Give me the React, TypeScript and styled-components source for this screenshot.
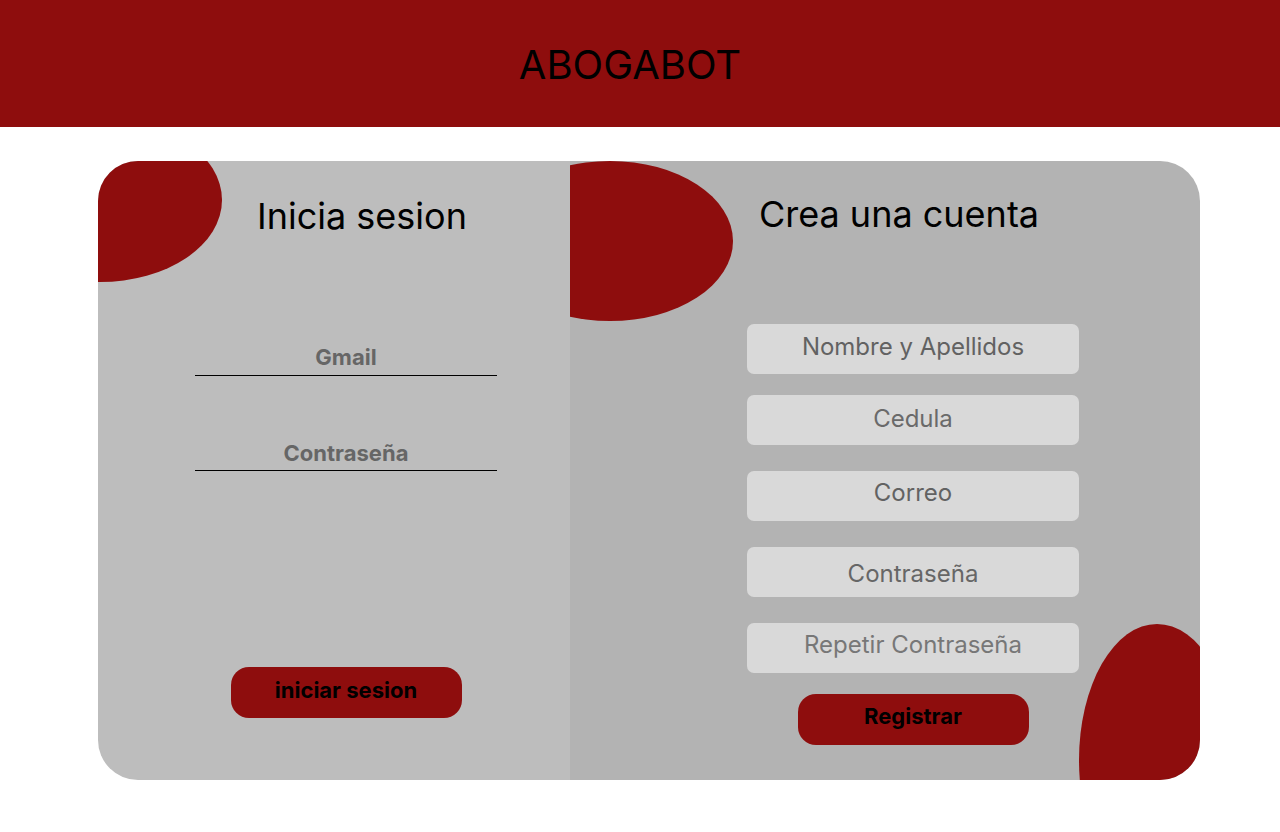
import React from "react";
import styled, { createGlobalStyle } from "styled-components";

const RED = "#8e0d0d";

const GlobalStyle = createGlobalStyle`
  body {
    margin: 0;
    background: #ffffff;
    font-family: Inter, "Noto Sans", sans-serif;
  }
`;

const Header = styled.header`
  height: 127px;
  background: ${RED};
  display: flex;
  align-items: center;
  justify-content: center;
  padding-right: 20px;
  box-sizing: border-box;
`;

const Brand = styled.h1`
  margin: 0;
  font-size: 40px;
  line-height: 48px;
  font-weight: 400;
  color: #000;
  padding-top: 2px;
`;

const Card = styled.main`
  width: 1102px;
  height: 619px;
  margin: 34px 0 0 98px;
  border-radius: 40px;
  overflow: hidden;
  display: grid;
  grid-template-columns: 472px 1fr;
`;

const Panel = styled.section<{ $bg: string }>`
  position: relative;
  overflow: hidden;
  background: ${(p) => p.$bg};
  display: flex;
  flex-direction: column;
`;

// decorative ellipses behind the content
const Blob = styled.div<{ $l: number; $t: number; $w: number; $h: number }>`
  position: absolute;
  left: ${(p) => p.$l}px;
  top: ${(p) => p.$t}px;
  width: ${(p) => p.$w}px;
  height: ${(p) => p.$h}px;
  border-radius: 50%;
  background: ${RED};
`;

const Title = styled.h2<{ $top: number; $shift: number }>`
  position: relative;
  margin: ${(p) => p.$top}px 0 0;
  padding-left: ${(p) => p.$shift}px;
  text-align: center;
  font-size: 36px;
  line-height: 44px;
  font-weight: 400;
  color: #000;
`;

const LoginForm = styled.div`
  position: relative;
  width: 302px;
  margin: 106px 0 0 97px;
  display: flex;
  flex-direction: column;
  align-items: center;
`;

const LineField = styled.div<{ $gap: number; $pad: number }>`
  width: 100%;
  margin-top: ${(p) => p.$gap}px;
  padding-bottom: ${(p) => p.$pad}px;
  border-bottom: 1px solid #000;
  text-align: center;
  font-size: 22px;
  line-height: 27px;
  font-weight: 700;
  color: #666666;
`;

const PillButton = styled.button<{ $top: number; $pad: number }>`
  margin-top: ${(p) => p.$top}px;
  width: 231px;
  height: 51px;
  border: none;
  border-radius: 18px;
  background: ${RED};
  color: #000;
  font-family: Inter, "Noto Sans", sans-serif;
  font-size: 22px;
  font-weight: 700;
  padding: 0 0 ${(p) => p.$pad}px;
  cursor: pointer;
`;

const SignupForm = styled.div`
  position: relative;
  width: 332px;
  margin: 88px 0 0 177px;
  display: flex;
  flex-direction: column;
  align-items: center;
`;

const InputBox = styled.div<{ $gap: number; $lift: number; $tone: string }>`
  width: 100%;
  height: 50px;
  box-sizing: border-box;
  margin-top: ${(p) => p.$gap}px;
  padding-bottom: ${(p) => Math.max(0, p.$lift * 2)}px;
  padding-top: ${(p) => Math.max(0, -p.$lift * 2)}px;
  border-radius: 7px;
  background: #d9d9d9;
  display: flex;
  align-items: center;
  justify-content: center;
  font-size: 24px;
  line-height: 29px;
  color: ${(p) => p.$tone};
`;

const fields = [
  { label: "Nombre y Apellidos", gap: 0, lift: 3, tone: "#626262" },
  { label: "Cedula", gap: 21, lift: 1.5, tone: "#6a6a6a" },
  { label: "Correo", gap: 26, lift: 4, tone: "#626262" },
  { label: "Contraseña", gap: 26, lift: -1, tone: "#666666" },
  { label: "Repetir Contraseña", gap: 26, lift: 3.5, tone: "#777777" },
];

export default function App() {
  return (
    <>
      <GlobalStyle />
      <Header>
        <Brand>ABOGABOT</Brand>
      </Header>
      <Card>
        <Panel $bg="#bdbdbd">
          <Blob $l={-120} $t={-43} $w={244} $h={164} />
          <Title $top={33} $shift={56}>
            Inicia sesion
          </Title>
          <LoginForm>
            <LineField $gap={0} $pad={4}>
              Gmail
            </LineField>
            <LineField $gap={64} $pad={3}>
              Contraseña
            </LineField>
            <PillButton $top={196} $pad={6}>
              iniciar sesion
            </PillButton>
          </LoginForm>
        </Panel>
        <Panel $bg="#b3b3b3">
          <Blob $l={-83} $t={0} $w={246} $h={160} />
          <Blob $l={509} $t={463} $w={156} $h={272} />
          <Title $top={31} $shift={28}>
            Crea una cuenta
          </Title>
          <SignupForm>
            {fields.map((f) => (
              <InputBox key={f.label} $gap={f.gap} $lift={f.lift} $tone={f.tone}>
                {f.label}
              </InputBox>
            ))}
            <PillButton $top={21} $pad={8}>
              Registrar
            </PillButton>
          </SignupForm>
        </Panel>
      </Card>
    </>
  );
}
